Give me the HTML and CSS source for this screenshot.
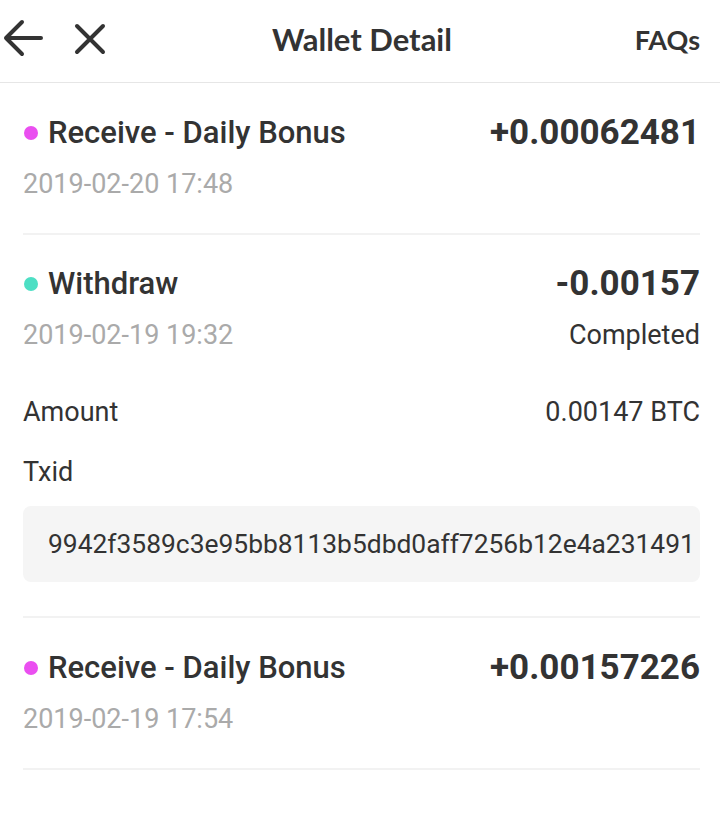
FILE: index.html
```html
<!DOCTYPE html>
<html>
<head>
<meta charset="utf-8">
<link rel="stylesheet" href="styles.css">
</head>
<body>
<header class="topbar">
  <div class="nav-icons">
    <svg class="icon back" width="42" height="40" viewBox="0 0 42 40"><path d="M39 19H4M20 3L4 19l16 16" fill="none" stroke="#333" stroke-width="4" stroke-linecap="round" stroke-linejoin="round"/></svg>
    <svg class="icon close" width="32" height="32" viewBox="0 0 32 32"><path d="M3 3l26 26M29 3L3 29" fill="none" stroke="#333" stroke-width="4" stroke-linecap="round"/></svg>
  </div>
  <h1 class="title">Wallet Detail</h1>
  <a class="faq">FAQs</a>
</header>
<main class="list">
  <section class="row">
    <div class="line">
      <div class="name"><span class="dot pink"></span>Receive - Daily Bonus</div>
      <div class="amount">+0.00062481</div>
    </div>
    <div class="line sub"><span class="date">2019-02-20 17:48</span></div>
  </section>
  <section class="row expanded">
    <div class="line">
      <div class="name"><span class="dot teal"></span>Withdraw</div>
      <div class="amount">-0.00157</div>
    </div>
    <div class="line sub"><span class="date">2019-02-19 19:32</span><span class="status">Completed</span></div>
    <div class="line detail first"><span>Amount</span><span>0.00147 BTC</span></div>
    <div class="line detail"><span>Txid</span></div>
    <div class="txid">9942f3589c3e95bb8113b5dbd0aff7256b12e4a231491</div>
  </section>
  <section class="row">
    <div class="line">
      <div class="name"><span class="dot pink"></span>Receive - Daily Bonus</div>
      <div class="amount">+0.00157226</div>
    </div>
    <div class="line sub"><span class="date">2019-02-19 17:54</span></div>
  </section>
</main>
</body>
</html>
```
FILE: styles.css
```css
html, body { margin: 0; padding: 0; background: #fff; }
body { font-family: Roboto, "Noto Sans", sans-serif; color: #333; width: 720px; }
.topbar {
  height: 82px;
  border-bottom: 1px solid #e6e6e6;
  display: flex;
  align-items: center;
  justify-content: space-between;
  padding: 0 20px 0 2px;
}
.nav-icons { display: flex; align-items: center; gap: 30px; width: 160px; }
.icon { display: block; }
.back { margin-top: -4px; }
.close { margin-top: -4px; }
.title {
  margin: 0;
  font-family: Lato, "Open Sans", sans-serif;
  font-weight: 700;
  font-size: 31px;
  color: #333;
  flex: 1;
  text-align: center;
  padding-left: 22px;
  margin-top: -4px;
}
.faq {
  font-family: Lato, "Open Sans", sans-serif;
  font-weight: 700;
  font-size: 27px;
  color: #333;
  width: 160px;
  text-align: right;
  margin-top: -4px;
}
.list { margin: 0 20px 0 23px; }
.row { border-bottom: 2px solid #f2f2f2; padding: 29px 0 29px; }
.row.expanded { padding: 28px 0 34px; }
.line { display: flex; justify-content: space-between; align-items: center; height: 40px; }
.name { display: flex; align-items: center; font-size: 31px; font-weight: 500; color: #333; }
.dot { width: 14px; height: 14px; border-radius: 50%; margin: 2px 10px 0 1px; }
.pink { background: #ea4ff0; }
.teal { background: #4ddfc4; }
.amount { font-size: 35px; font-weight: 700; color: #333; }
.sub { margin-top: 12px; font-size: 27px; }
.date { color: #aaa; }
.status { color: #333; }
.detail { font-size: 27px; color: #333; }
.detail.first { margin-top: 37px; }
.detail + .detail { margin-top: 20px; }
.txid {
  margin-top: 14px;
  height: 76px;
  background: #f5f5f5;
  border-radius: 8px;
  padding: 0 0 0 25px;
  font-size: 26.4px;
  line-height: 76px;
  white-space: nowrap;
  overflow: hidden;
  color: #333;
}
```
